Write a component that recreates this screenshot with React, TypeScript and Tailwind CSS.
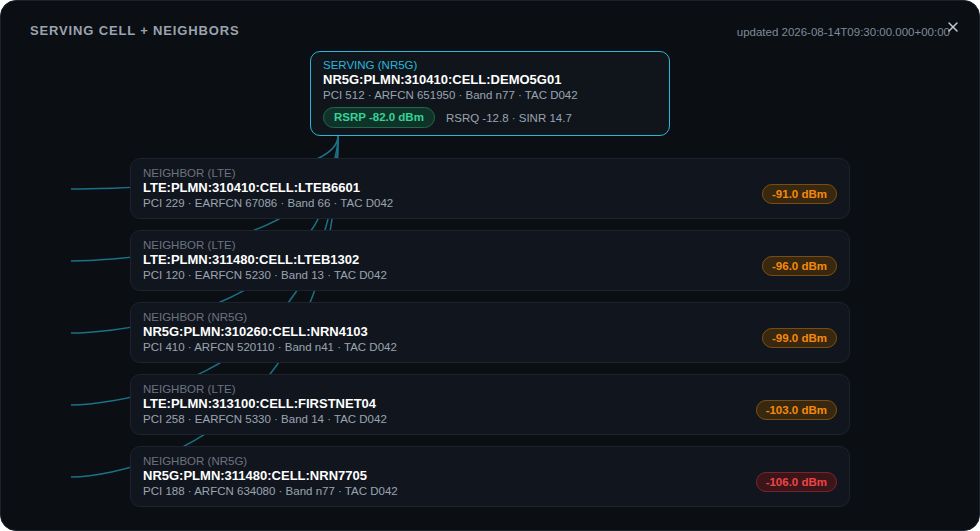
import { X } from 'lucide-react'

type Neighbor = {
  rat: 'LTE' | 'NR5G'
  id: string
  pci: number
  freqLabel: string
  freq: number
  band: string
  tac: string
  rsrp: number
}

const neighbors: Neighbor[] = [
  { rat: 'LTE', id: 'LTE:PLMN:310410:CELL:LTEB6601', pci: 229, freqLabel: 'EARFCN', freq: 67086, band: '66', tac: 'D042', rsrp: -91.0 },
  { rat: 'LTE', id: 'LTE:PLMN:311480:CELL:LTEB1302', pci: 120, freqLabel: 'EARFCN', freq: 5230, band: '13', tac: 'D042', rsrp: -96.0 },
  { rat: 'NR5G', id: 'NR5G:PLMN:310260:CELL:NRN4103', pci: 410, freqLabel: 'ARFCN', freq: 520110, band: 'n41', tac: 'D042', rsrp: -99.0 },
  { rat: 'LTE', id: 'LTE:PLMN:313100:CELL:FIRSTNET04', pci: 258, freqLabel: 'EARFCN', freq: 5330, band: '14', tac: 'D042', rsrp: -103.0 },
  { rat: 'NR5G', id: 'NR5G:PLMN:311480:CELL:NRN7705', pci: 188, freqLabel: 'ARFCN', freq: 634080, band: 'n77', tac: 'D042', rsrp: -106.0 },
]

// link origin (bottom of serving card) and left end of each curve
const SX = 337
const SY = 135
const TX = 70
const firstY = 188
const step = 72

function RsrpBadge({ value }: { value: number }) {
  const weak = value <= -105
  return (
    <span
      className={`shrink-0 rounded-full border px-[9px] py-[3px] text-[11.5px] font-bold leading-[13px] ${
        weak
          ? 'border-[#7a2329] bg-[#3a161a] text-[#ef4444]'
          : 'border-[#7a4c12] bg-[#382810] text-[#f5890c]'
      }`}
    >
      {value.toFixed(1)} dBm
    </span>
  )
}

export default function App() {
  return (
    <div
      className="relative h-[531px] w-[980px] overflow-hidden rounded-[16px] border border-[#1c222b] bg-[#0b0e13]"
      style={{ fontFamily: '"Liberation Sans", Arial, sans-serif' }}
    >
      {/* links */}
      <svg className="pointer-events-none absolute inset-0" width="980" height="531">
        {neighbors.map((_, i) => {
          const ty = firstY + i * step
          return (
            <path
              key={i}
              d={`M ${SX} ${SY} C ${SX} ${ty}, ${TX} ${ty}, ${TX} ${ty}`}
              fill="none"
              stroke="#1b7185"
              strokeWidth="1.5"
            />
          )
        })}
      </svg>

      {/* Header */}
      <div className="relative flex items-start justify-between pl-[29px] pr-[29px] pt-[22px]">
        <h2 className="text-[13px] font-bold leading-[16px] tracking-[0.065em] text-[#9aa3ae]">
          SERVING CELL + NEIGHBORS
        </h2>
        <span className="pt-[2px] text-[11.5px] leading-[14px] text-[#7f8b99]">
          updated 2026-08-14T09:30:00.000+00:00
        </span>
        <button className="absolute right-[18px] top-[18px] text-[#c3cad3]">
          <X size={16} strokeWidth={2.2} />
        </button>
      </div>

      {/* Serving cell */}
      <div className="relative mx-auto mt-[12px] w-[360px] rounded-[10px] border-[1.5px] border-[#29b6d8] bg-[#10151c] px-[12px] pb-[7px] pt-[7px]">
        <div className="text-[11.5px] leading-[13px] text-[#29b6d8]">SERVING (NR5G)</div>
        <div className="text-[13px] font-bold leading-[15px] text-white">NR5G:PLMN:310410:CELL:DEMO5G01</div>
        <div className="text-[11.5px] leading-[16px] text-[#9aa4b1]">PCI 512 · ARFCN 651950 · Band n77 · TAC D042</div>
        <div className="mt-[4px] flex items-center gap-[11px]">
          <span className="rounded-full border border-[#1f6a4e] bg-[#0f3328] px-[10px] py-[3px] text-[11.5px] font-bold leading-[13px] text-[#34d399]">
            RSRP -82.0 dBm
          </span>
          <span className="text-[11.5px] leading-[14px] text-[#9aa4b1]">RSRQ -12.8 · SINR 14.7</span>
        </div>
      </div>

      {/* Neighbors */}
      <div className="relative mx-auto mt-[22px] flex w-[720px] flex-col gap-[11px]">
        {neighbors.map((n) => (
          <div
            key={n.id}
            className="flex h-[61px] items-start justify-between rounded-[10px] border border-[#1c232d] bg-[#11161e] pl-[12px] pr-[12px] pt-[8px]"
          >
            <div>
              <div className="text-[11.5px] leading-[13px] text-[#6b7380]">NEIGHBOR ({n.rat})</div>
              <div className="text-[13px] font-bold leading-[15px] text-white">{n.id}</div>
              <div className="text-[11.5px] leading-[16px] text-[#9aa4b1]">
                PCI {n.pci} · {n.freqLabel} {n.freq} · Band {n.band} · TAC {n.tac}
              </div>
            </div>
            <div className="self-center">
              <RsrpBadge value={n.rsrp} />
            </div>
          </div>
        ))}
      </div>
    </div>
  )
}
